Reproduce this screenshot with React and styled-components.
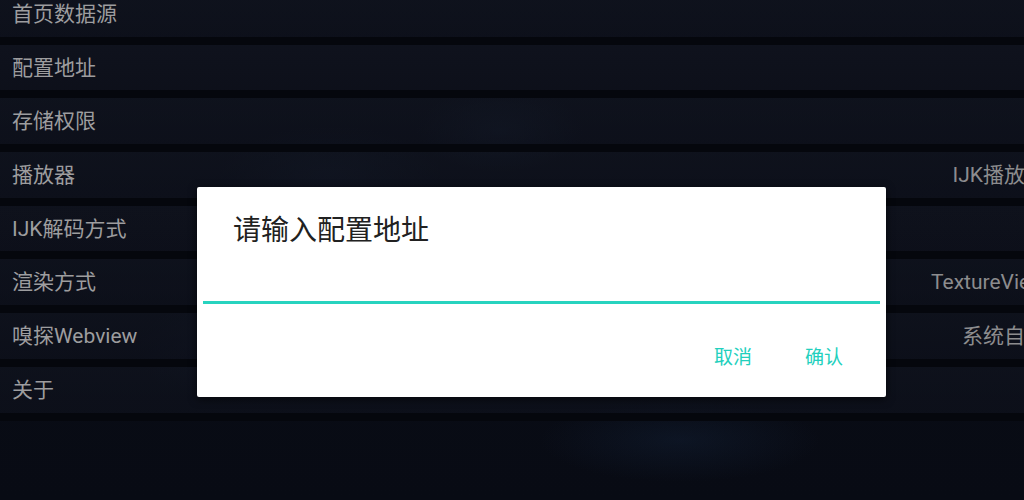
import React from "react";
import styled, { createGlobalStyle } from "styled-components";

const Global = createGlobalStyle`
  html, body { margin: 0; padding: 0; overflow: hidden; }
  body {
    width: 1024px; height: 500px;
    background: #090c15;
    font-family: Roboto, "Noto Sans CJK SC", "Noto Sans", sans-serif;
  }
`;

const Page = styled.div`
  position: relative;
  width: 1024px;
  height: 500px;
  overflow: hidden;
  background:
    radial-gradient(ellipse 120px 60px at 500px 130px, rgba(40, 60, 90, 0.18), transparent 70%),
    radial-gradient(ellipse 160px 70px at 330px 175px, rgba(40, 60, 90, 0.15), transparent 70%),
    radial-gradient(ellipse 200px 60px at 680px 440px, rgba(30, 55, 90, 0.22), transparent 70%),
    radial-gradient(ellipse 180px 80px at 260px 350px, rgba(30, 40, 70, 0.2), transparent 70%),
    linear-gradient(180deg, #0b0e18 0%, #080b14 100%);
`;

const List = styled.ul`
  list-style: none;
  margin: -9px 0 0 0;
  padding: 0;
  width: calc(100% + 34px);
`;

const Row = styled.li`
  box-sizing: border-box;
  height: 53.7px;
  display: flex;
  align-items: center;
  justify-content: space-between;
  padding: 0 12px 8px;
  background: linear-gradient(180deg, rgba(18, 22, 33, 0.55), rgba(15, 18, 29, 0.55));
  border-bottom: 8px solid #05070d;
  background-clip: padding-box;
  font-size: 21px;
  line-height: 46px;
`;

const Label = styled.span`
  color: #9d9d9f;
  padding-top: 8px;
`;

const Value = styled.span`
  color: #8c8c8e;
  padding-top: 8px;
`;

const Dialog = styled.div`
  position: absolute;
  left: 197px;
  top: 187px;
  width: 689px;
  height: 210px;
  box-sizing: border-box;
  background: #ffffff;
  border-radius: 2px;
  box-shadow: 0 2px 8px rgba(0, 0, 0, 0.6);
  display: flex;
  flex-direction: column;
`;

const Title = styled.h2`
  margin: 0;
  padding: 26px 36px 0;
  font-weight: 400;
  font-size: 28px;
  line-height: 36px;
  color: #212121;
`;

const Input = styled.input`
  margin: 0 6px;
  height: 52px;
  border: none;
  border-bottom: 3px solid #27d3bf;
  outline: none;
  background: transparent;
  font-family: inherit;
  font-size: 20px;
  padding: 0 30px;
`;

const Actions = styled.div`
  display: flex;
  justify-content: flex-end;
  align-items: center;
  gap: 53px;
  padding: 36px 43px 0 0;
`;

const ActionButton = styled.button`
  border: none;
  background: none;
  padding: 0;
  font-family: inherit;
  font-size: 19px;
  line-height: 36px;
  color: #22d0bd;
  cursor: pointer;
`;

const rows = [
  { label: "首页数据源", value: "" },
  { label: "配置地址", value: "" },
  { label: "存储权限", value: "" },
  { label: "播放器", value: "IJK播放器" },
  { label: "IJK解码方式", value: "" },
  { label: "渲染方式", value: "TextureView" },
  { label: "嗅探Webview", value: "系统自带" },
  { label: "关于", value: "" },
];

export default function App() {
  return (
    <>
      <Global />
      <Page>
        <List>
          {rows.map((r) => (
            <Row key={r.label}>
              <Label>{r.label}</Label>
              <Value>{r.value}</Value>
            </Row>
          ))}
        </List>
        <Dialog>
          <Title>请输入配置地址</Title>
          <Input aria-label="配置地址" />
          <Actions>
            <ActionButton>取消</ActionButton>
            <ActionButton>确认</ActionButton>
          </Actions>
        </Dialog>
      </Page>
    </>
  );
}
